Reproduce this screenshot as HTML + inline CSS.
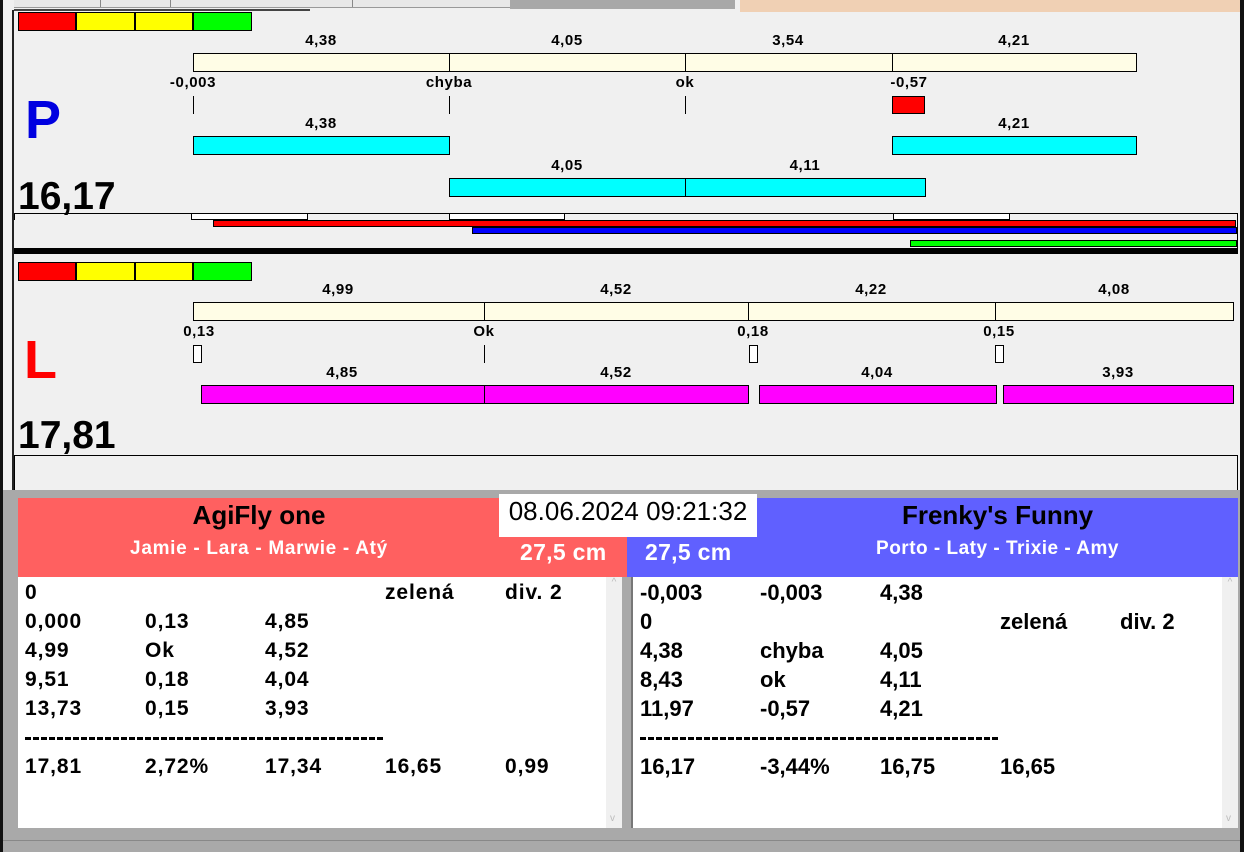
<!DOCTYPE html>
<html><head><meta charset="utf-8"><style>
*{margin:0;padding:0;box-sizing:border-box}
body{width:1244px;height:852px;position:relative;overflow:hidden;background:#f0f0f0;font-family:"Liberation Sans",Arial,sans-serif}
div{position:absolute}
.b{border:1px solid #000}
.l{font-weight:bold;font-size:15px;letter-spacing:0.6px;width:120px;text-align:center;line-height:16px;color:#000}
.t{width:1px;background:#000}
.row{font-weight:bold;font-size:21px;letter-spacing:0.9px;line-height:22px;color:#000;white-space:nowrap}
.rn{letter-spacing:0px;font-size:22px}
.dash{height:3px;background:repeating-linear-gradient(90deg,#000 0 6px,transparent 6px 8px)}
</style></head><body>
<div style="left:0;top:0;width:1244px;height:12px;background:#f0f0f0"></div>
<div style="left:14px;top:0;width:496px;height:8px;background:#e8e8e8;border-bottom:1px solid #999"></div>
<div style="left:100px;top:0;width:1px;height:7px;background:#888"></div>
<div style="left:170px;top:0;width:1px;height:7px;background:#888"></div>
<div style="left:352px;top:0;width:1px;height:7px;background:#888"></div>
<div style="left:510px;top:0;width:225px;height:9px;background:#a8a8a8"></div>
<div style="left:14px;top:9px;width:296px;height:2px;background:#444"></div>
<div style="left:740px;top:0;width:500px;height:12px;background:#f0d0b4"></div>
<div style="left:0;top:0;width:3px;height:852px;background:#111"></div>
<div style="left:12px;top:10px;width:2px;height:480px;background:#222"></div>
<div style="left:1240px;top:0;width:4px;height:852px;background:#111"></div>

<div style="left:18px;top:12px;width:58px;height:19px;background:#f00" class="b"></div>
<div style="left:76px;top:12px;width:59px;height:19px;background:#ff0" class="b"></div>
<div style="left:135px;top:12px;width:58px;height:19px;background:#ff0" class="b"></div>
<div style="left:193px;top:12px;width:59px;height:19px;background:#0f0" class="b"></div>

<div class="l" style="left:261px;top:33px">4,38</div>
<div class="l" style="left:507px;top:33px">4,05</div>
<div class="l" style="left:728px;top:33px">3,54</div>
<div class="l" style="left:954px;top:33px">4,21</div>
<div class="b" style="left:193px;top:53px;width:944px;height:19px;background:#fffde6"></div>
<div class="t" style="left:449px;top:53px;height:19px"></div>
<div class="t" style="left:685px;top:53px;height:19px"></div>
<div class="t" style="left:892px;top:53px;height:19px"></div>
<div class="l" style="left:133px;top:75px">-0,003</div>
<div class="l" style="left:389px;top:75px">chyba</div>
<div class="l" style="left:625px;top:75px">ok</div>
<div class="l" style="left:849px;top:75px">-0,57</div>
<div class="t" style="left:193px;top:96px;height:18px"></div>
<div class="t" style="left:449px;top:96px;height:18px"></div>
<div class="t" style="left:685px;top:96px;height:18px"></div>
<div class="b" style="left:892px;top:96px;width:33px;height:18px;background:#f00"></div>
<div style="left:25px;top:90px;font-size:54px;font-weight:bold;color:#0000e0;line-height:60px">P</div>
<div class="l" style="left:261px;top:116px">4,38</div>
<div class="l" style="left:954px;top:116px">4,21</div>
<div class="b" style="left:193px;top:136px;width:257px;height:19px;background:#0ff"></div>
<div class="b" style="left:892px;top:136px;width:245px;height:19px;background:#0ff"></div>
<div class="l" style="left:507px;top:158px">4,05</div>
<div class="l" style="left:745px;top:158px">4,11</div>
<div class="b" style="left:449px;top:178px;width:477px;height:19px;background:#0ff"></div>
<div class="t" style="left:685px;top:178px;height:19px"></div>
<div style="left:18px;top:175px;font-size:39px;font-weight:bold;line-height:44px">16,17</div>
<div style="left:14px;top:213px;width:1224px;height:1px;background:#000"></div>
<div style="left:14px;top:213px;width:1px;height:7px;background:#000"></div>
<div class="b" style="left:191px;top:213px;width:117px;height:7px;background:#fff"></div>
<div class="b" style="left:449px;top:213px;width:116px;height:7px;background:#fff"></div>
<div class="b" style="left:893px;top:213px;width:117px;height:7px;background:#fff"></div>
<div style="left:1237px;top:213px;width:1px;height:35px;background:#000"></div>
<div class="b" style="left:213px;top:220px;width:1023px;height:7px;background:#f00"></div>
<div class="b" style="left:472px;top:227px;width:765px;height:7px;background:#00f"></div>
<div class="b" style="left:910px;top:240px;width:327px;height:7px;background:#0f0"></div>
<div style="left:14px;top:248px;width:1224px;height:6px;background:#000"></div>

<div style="left:18px;top:262px;width:58px;height:19px;background:#f00" class="b"></div>
<div style="left:76px;top:262px;width:59px;height:19px;background:#ff0" class="b"></div>
<div style="left:135px;top:262px;width:58px;height:19px;background:#ff0" class="b"></div>
<div style="left:193px;top:262px;width:59px;height:19px;background:#0f0" class="b"></div>
<div class="l" style="left:278px;top:282px">4,99</div>
<div class="l" style="left:556px;top:282px">4,52</div>
<div class="l" style="left:811px;top:282px">4,22</div>
<div class="l" style="left:1054px;top:282px">4,08</div>
<div class="b" style="left:193px;top:302px;width:1041px;height:19px;background:#fffde6"></div>
<div class="t" style="left:484px;top:302px;height:19px"></div>
<div class="t" style="left:748px;top:302px;height:19px"></div>
<div class="t" style="left:995px;top:302px;height:19px"></div>
<div class="l" style="left:139px;top:324px">0,13</div>
<div class="l" style="left:424px;top:324px">Ok</div>
<div class="l" style="left:693px;top:324px">0,18</div>
<div class="l" style="left:939px;top:324px">0,15</div>
<div class="b" style="left:193px;top:345px;width:9px;height:18px;background:#fff"></div>
<div class="t" style="left:484px;top:345px;height:18px"></div>
<div class="b" style="left:749px;top:345px;width:9px;height:18px;background:#fff"></div>
<div class="b" style="left:995px;top:345px;width:9px;height:18px;background:#fff"></div>
<div style="left:24px;top:330px;font-size:54px;font-weight:bold;color:#f00;line-height:60px">L</div>
<div class="l" style="left:282px;top:365px">4,85</div>
<div class="l" style="left:556px;top:365px">4,52</div>
<div class="l" style="left:817px;top:365px">4,04</div>
<div class="l" style="left:1058px;top:365px">3,93</div>
<div class="b" style="left:201px;top:385px;width:548px;height:19px;background:#f0f"></div>
<div class="t" style="left:484px;top:385px;height:19px"></div>
<div class="b" style="left:759px;top:385px;width:238px;height:19px;background:#f0f"></div>
<div class="b" style="left:1003px;top:385px;width:231px;height:19px;background:#f0f"></div>
<div style="left:18px;top:414px;font-size:39px;font-weight:bold;line-height:44px">17,81</div>
<div class="b" style="left:14px;top:455px;width:1224px;height:36px;border-bottom:none"></div>

<div style="left:3px;top:490px;width:1237px;height:362px;background:#a9a9a9"></div>
<div style="left:18px;top:498px;width:609px;height:79px;background:#ff6060"></div>
<div style="left:627px;top:498px;width:611px;height:79px;background:#6060ff"></div>
<div style="left:18px;top:500px;width:482px;text-align:center;font-size:26px;font-weight:bold;line-height:30px">AgiFly one</div>
<div style="left:18px;top:538px;width:482px;text-align:center;font-size:19px;letter-spacing:0.7px;font-weight:bold;color:#fff;line-height:22px">Jamie - Lara - Marwie - Atý</div>
<div style="left:499px;top:494px;width:258px;height:43px;background:#fff;font-size:26px;text-align:center;line-height:34px;white-space:nowrap">08.06.2024 09:21:32</div>
<div style="left:520px;top:539px;font-size:23px;letter-spacing:0.3px;font-weight:bold;color:#fff;line-height:26px">27,5 cm</div>
<div style="left:645px;top:539px;font-size:23px;letter-spacing:0.3px;font-weight:bold;color:#fff;line-height:26px">27,5 cm</div>
<div style="left:757px;top:500px;width:481px;text-align:center;font-size:26px;font-weight:bold;line-height:30px">Frenky's Funny</div>
<div style="left:757px;top:538px;width:481px;text-align:center;font-size:19px;letter-spacing:0.5px;font-weight:bold;color:#fff;line-height:22px">Porto - Laty - Trixie - Amy</div>

<div style="left:18px;top:577px;width:604px;height:251px;background:#fff"></div>
<div style="left:606px;top:577px;width:16px;height:251px;background:#f0f0f0;color:#bbb;font-size:10px;text-align:center">^<div style="left:4px;top:236px">v</div></div>
<div style="left:631px;top:577px;width:607px;height:251px;background:#fff;border-left:2px solid #777"></div>
<div style="left:1222px;top:577px;width:16px;height:251px;background:#f0f0f0;color:#bbb;font-size:10px;text-align:center">^<div style="left:4px;top:236px">v</div></div>

<div class="row" style="left:25px;top:582px">0</div><div class="row" style="left:385px;top:582px">zelená</div><div class="row" style="left:505px;top:582px">div. 2</div>
<div class="row" style="left:25px;top:611px">0,000</div><div class="row" style="left:145px;top:611px">0,13</div><div class="row" style="left:265px;top:611px">4,85</div>
<div class="row" style="left:25px;top:640px">4,99</div><div class="row" style="left:145px;top:640px">Ok</div><div class="row" style="left:265px;top:640px">4,52</div>
<div class="row" style="left:25px;top:669px">9,51</div><div class="row" style="left:145px;top:669px">0,18</div><div class="row" style="left:265px;top:669px">4,04</div>
<div class="row" style="left:25px;top:698px">13,73</div><div class="row" style="left:145px;top:698px">0,15</div><div class="row" style="left:265px;top:698px">3,93</div>
<div class="dash" style="left:25px;top:737px;width:360px"></div>
<div class="row" style="left:25px;top:756px">17,81</div><div class="row" style="left:145px;top:756px">2,72%</div><div class="row" style="left:265px;top:756px">17,34</div><div class="row" style="left:385px;top:756px">16,65</div><div class="row" style="left:505px;top:756px">0,99</div>

<div class="row rn" style="left:640px;top:582px">-0,003</div><div class="row rn" style="left:760px;top:582px">-0,003</div><div class="row rn" style="left:880px;top:582px">4,38</div>
<div class="row rn" style="left:640px;top:611px">0</div><div class="row rn" style="left:1000px;top:611px">zelená</div><div class="row rn" style="left:1120px;top:611px">div. 2</div>
<div class="row rn" style="left:640px;top:640px">4,38</div><div class="row rn" style="left:760px;top:640px">chyba</div><div class="row rn" style="left:880px;top:640px">4,05</div>
<div class="row rn" style="left:640px;top:669px">8,43</div><div class="row rn" style="left:760px;top:669px">ok</div><div class="row rn" style="left:880px;top:669px">4,11</div>
<div class="row rn" style="left:640px;top:698px">11,97</div><div class="row rn" style="left:760px;top:698px">-0,57</div><div class="row rn" style="left:880px;top:698px">4,21</div>
<div class="dash" style="left:640px;top:737px;width:360px"></div>
<div class="row rn" style="left:640px;top:756px">16,17</div><div class="row rn" style="left:760px;top:756px">-3,44%</div><div class="row rn" style="left:880px;top:756px">16,75</div><div class="row rn" style="left:1000px;top:756px">16,65</div>
<div style="left:3px;top:840px;width:1237px;height:1px;background:#888"></div>
</body></html>
